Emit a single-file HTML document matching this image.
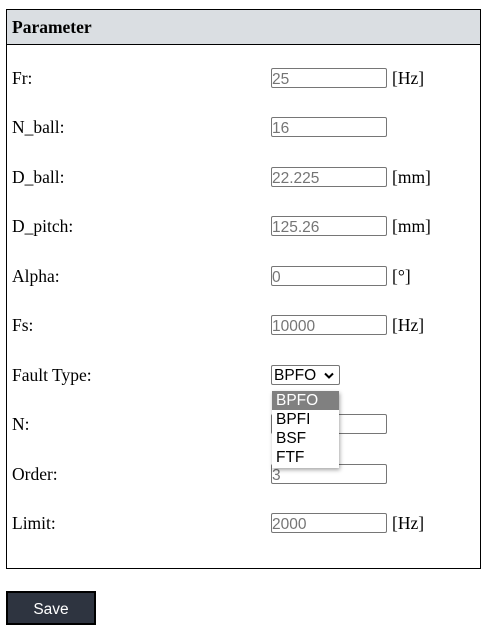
<!DOCTYPE html>
<html><head><meta charset="utf-8"><style>
body{margin:0;width:496px;height:630px;background:#fff;position:relative;font-family:"Liberation Serif",serif;font-size:17.5px;color:#000;overflow:hidden}
.box{position:absolute;left:6px;top:9px;width:473px;height:558px;border:1px solid #000}
.hdr{position:absolute;left:0;top:0;width:473px;height:34px;background:#dadee2;border-bottom:1px solid #000}
.hdr b{position:absolute;left:5px;top:7px;font-size:17.5px}
.lab{position:absolute;left:12px;line-height:20px}
.inp{position:absolute;left:271px;width:114px;height:18px;border:1px solid #767676;border-radius:2px;font-family:"Liberation Sans",sans-serif;font-size:15.5px;color:#757575;line-height:21px;padding-left:0;box-sizing:content-box;overflow:hidden}
.unit{position:absolute;left:392px;line-height:20px}
.sel{position:absolute;left:271px;top:365px;width:65px;height:18px;border:1px solid #767676;border-radius:2px;font-family:"Liberation Sans",sans-serif;font-size:15.5px;line-height:20px;padding-left:2px;box-sizing:content-box}
.dd{position:absolute;left:272px;top:391px;width:67px;height:77px;background:#fff;box-shadow:1px 2px 4px rgba(0,0,0,.35);font-family:"Liberation Sans",sans-serif;font-size:15.5px}
.dd div{height:19px;line-height:20px;padding-left:4px}
.btn{position:absolute;left:6px;top:591px;width:86px;height:30px;background:#2e3440;border:2px solid #000;color:#fff;font-family:"Liberation Sans",sans-serif;font-size:15.5px;text-align:center;line-height:33px}
</style></head><body>
<div class="box"><div class="hdr"><b>Parameter</b></div></div>

<div class="lab" style="top:68px">Fr:</div><div class="inp" style="top:68px">25</div><div class="unit" style="top:68px">[Hz]</div>
<div class="lab" style="top:117px">N_ball:</div><div class="inp" style="top:117px">16</div>
<div class="lab" style="top:167px">D_ball:</div><div class="inp" style="top:167px">22.225</div><div class="unit" style="top:167px">[mm]</div>
<div class="lab" style="top:216px">D_pitch:</div><div class="inp" style="top:216px">125.26</div><div class="unit" style="top:216px">[mm]</div>
<div class="lab" style="top:266px">Alpha:</div><div class="inp" style="top:266px">0</div><div class="unit" style="top:266px">[°]</div>
<div class="lab" style="top:315px">Fs:</div><div class="inp" style="top:315px">10000</div><div class="unit" style="top:315px">[Hz]</div>
<div class="lab" style="top:365px">Fault Type:</div>
<div class="sel">BPFO <svg width="10" height="8" viewBox="0 0 10 8" style="position:absolute;left:52px;top:6px"><path d="M1 1.5L5 5.5L9 1.5" stroke="#000" stroke-width="2" fill="none"/></svg></div>
<div class="lab" style="top:414px">N:</div><div class="inp" style="top:414px"></div>
<div class="lab" style="top:464px">Order:</div><div class="inp" style="top:464px">3</div>
<div class="lab" style="top:513px">Limit:</div><div class="inp" style="top:513px">2000</div><div class="unit" style="top:513px">[Hz]</div>
<div class="dd"><div style="background:#808080;color:#fff">BPFO</div><div>BPFI</div><div>BSF</div><div>FTF</div></div>
<div class="btn">Save</div>
</body></html>
